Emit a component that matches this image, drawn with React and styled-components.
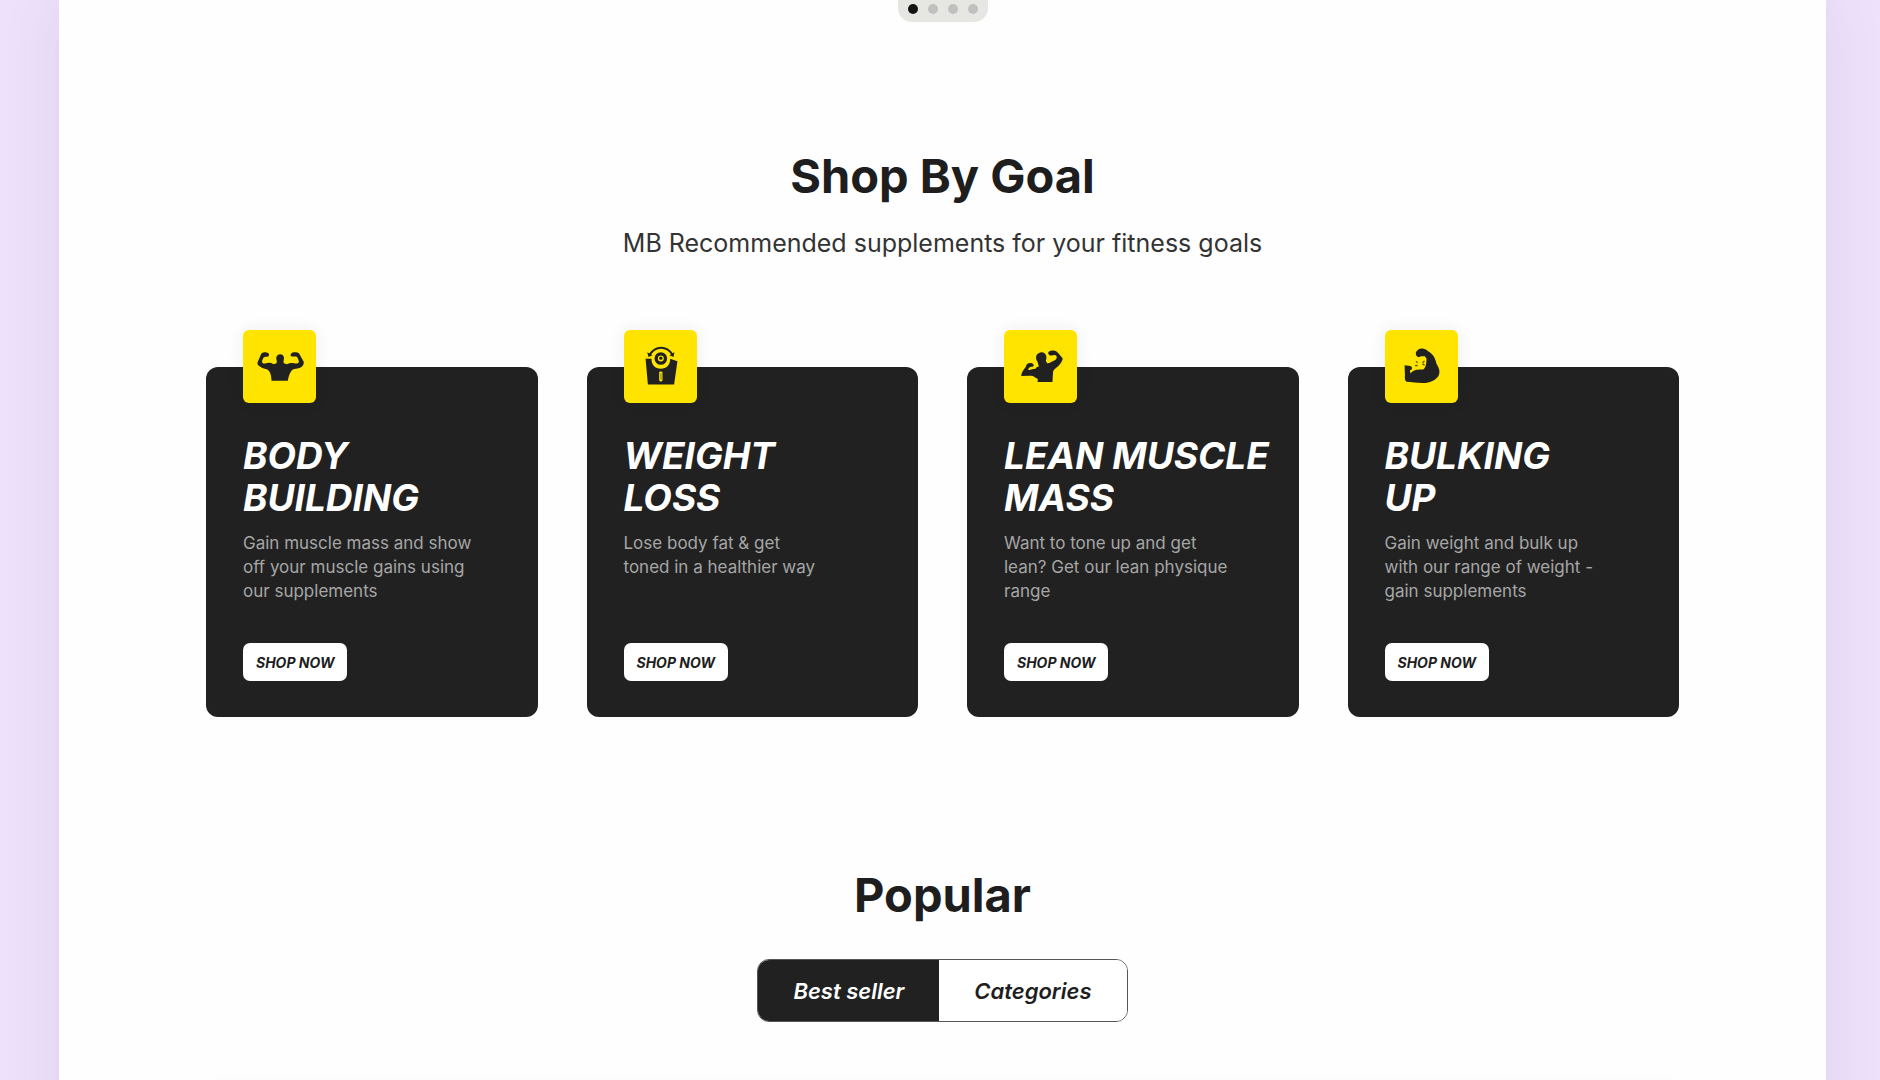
import React, { useState } from 'react'
import styled, { createGlobalStyle } from 'styled-components'

const GlobalStyle = createGlobalStyle`
  * {
    box-sizing: border-box;
  }

  body {
    margin: 0;
    padding: 0 54px 0 59px;
    overflow-x: hidden;
    background-color: #eee1fb;
    color: #1e1e1e;
    font-family: Inter, "Liberation Sans", sans-serif;
  }
`

const Page = styled.main`
  min-height: 100vh;
  padding: 0 147px;
  background-color: #fefefe;
  box-shadow: 0 0 56px rgba(80, 80, 120, 0.1);
`

const Dots = styled.div`
  display: flex;
  justify-content: center;
  gap: 10px;
  width: 90px;
  height: 22px;
  margin: 0 auto;
  padding-top: 4px;
  border-radius: 0 0 14px 14px;
  background-color: #e6e6e2;
`

const Dot = styled.button`
  width: 10px;
  height: 10px;
  padding: 0;
  border: none;
  border-radius: 50%;
  background-color: ${(props) => (props.$active ? '#141414' : '#c0c0c0')};
`

const Section = styled.section`
  display: flex;
  flex-direction: column;
  align-items: center;
  padding-top: ${(props) => props.$top}px;
`

const Title = styled.h2`
  margin: 0;
  font-size: 47px;
  font-weight: 700;
  line-height: 60px;
`

const Subtitle = styled.p`
  margin: 21px 0 0;
  font-size: 25px;
  line-height: 32px;
  color: #333333;
`

const Cards = styled.div`
  display: grid;
  grid-template-columns: repeat(4, 1fr);
  gap: 49px;
  width: 100%;
  margin-top: 108px;
`

const Card = styled.article`
  display: flex;
  flex-direction: column;
  align-items: flex-start;
  min-height: 350px;
  padding: 0 18px 36px 37px;
  border-radius: 12px;
  background-color: #212121;
`

const IconBox = styled.div`
  width: 73px;
  height: 73px;
  margin-top: -37px;
  border-radius: 6px;
  background-color: #ffe400;
  box-shadow: 0 0 16px rgba(40, 40, 80, 0.08);

  svg {
    display: block;
    width: 100%;
    height: 100%;
  }
`

const CardTitle = styled.h3`
  margin: 32px 0 0;
  color: #ffffff;
  font-size: 37px;
  font-style: italic;
  font-weight: 700;
  line-height: 42px;
  white-space: pre-line;
`

const CardText = styled.p`
  margin: 12px 0 20px;
  color: #a6a6a6;
  font-size: 17px;
  line-height: 24px;
  white-space: pre-line;
`

const ShopButton = styled.button`
  height: 38px;
  margin-top: auto;
  padding: 0 13px;
  border: none;
  border-radius: 7px;
  background-color: #ffffff;
  color: #1e1e1e;
  font-family: inherit;
  font-size: 14px;
  font-style: italic;
  font-weight: 700;
`

const Tabs = styled.div`
  display: flex;
  height: 63px;
  margin-top: 34px;
  border: 1px solid #555555;
  border-radius: 12px;
  overflow: hidden;
`

const Tab = styled.button`
  padding: 0 35px;
  border: none;
  background-color: ${(props) => (props.$active ? '#212121' : '#ffffff')};
  color: ${(props) => (props.$active ? '#ffffff' : '#1e1e1e')};
  font-family: inherit;
  font-size: 22px;
  font-style: italic;
  font-weight: 600;
`

const Products = styled.div`
  width: 100%;
  height: 300px;
  margin-top: 62px;
  border-radius: 12px;
  background-color: #ffffff;
  box-shadow: 0 0 16px rgba(0, 0, 0, 0.03);
`

function BodyIcon() {
  return (
    <svg viewBox="38 28 220 220" fill="#212121" aria-hidden="true">
      <path d="M140 122C136 110 140 101 150 101C160 101 164 110 160 122L161 128L170 131C180 126 190 127 197 129C206 130 208 125 205 118L201 109C194 105 189 111 182 106C180 99 186 95 194 95C203 94 208 97 210 104L221 124C222 132 219 137 212 141C201 146 194 143 187 148C181 155 177 161 173 181H124C123 162 120 155 113 148C104 143 97 145 89 138C80 133 81 128 83 123L91 104C93 97 98 94 106 95C115 96 119 101 115 107C109 110 104 107 100 111L96 119C94 127 98 130 105 129C114 126 121 126 130 131L139 128Z" />
    </svg>
  )
}

function ScaleIcon() {
  return (
    <svg viewBox="38 28 220 220" fill="#212121" aria-hidden="true">
      <path d="M103 115H121C120 133 132 145 149 145C166 145 178 133 177 115L199 122L189 192H110Z" />
      <path d="M115 103C133 74 166 75 184 102" fill="none" stroke="#212121" strokeWidth="6" />
      <path d="M108 95L112 109L124 104ZM190 95L187 109L175 104Z" />
      <circle cx="149" cy="114" r="14" fill="none" stroke="#212121" strokeWidth="10" />
      <circle cx="149" cy="113" r="5" />
      <rect x="144" y="153" width="10" height="30" rx="4" fill="#ffe400" />
      <rect x="148" y="158" width="3" height="20" fill="#8a7c12" />
    </svg>
  )
}

function LeanIcon() {
  return (
    <svg viewBox="38 28 220 220" fill="#212121" aria-hidden="true">
      <path d="M139 124C130 110 136 97 150 95C164 94 169 108 164 121L168 128C176 129 181 124 188 121C195 118 199 112 196 106C190 100 184 108 175 104C167 97 173 91 183 90C193 89 197 93 202 98L215 114C214 123 208 130 201 137C195 143 188 145 186 153L184 185H139L140 176C131 171 127 164 115 166L90 167C90 157 97 148 104 139C105 130 112 127 121 128C129 130 129 137 124 139C117 137 114 141 110 148C118 150 123 145 133 145C134 141 139 138 143 138Z" />
    </svg>
  )
}

function BulkIcon() {
  return (
    <svg viewBox="38 28 220 220" fill="#212121" aria-hidden="true">
      <path d="M131 101C130 90 141 84 151 84C160 84 165 91 174 96C185 104 190 115 193 129C198 140 205 147 201 162C195 178 175 188 151 188C134 188 119 184 103 184C98 181 97 174 98 163L97 134C107 136 115 134 119 140L119 147L113 149L115 159C125 145 140 148 153 147C162 142 163 126 163 114L158 107C151 108 146 105 141 110C137 110 132 107 131 101Z" />
      <path d="M131 123L137 126M157 121L151 127M136 135H129M151 130L157 134" fill="none" stroke="#5c5310" strokeWidth="4" />
    </svg>
  )
}

const goals = [
  {
    title: 'BODY\nBUILDING',
    text: 'Gain muscle mass and show\noff your muscle gains using\nour supplements',
    Icon: BodyIcon,
  },
  {
    title: 'WEIGHT\nLOSS',
    text: 'Lose body fat & get\ntoned in a healthier way',
    Icon: ScaleIcon,
  },
  {
    title: 'LEAN MUSCLE\nMASS',
    text: 'Want to tone up and get\nlean? Get our lean physique\nrange',
    Icon: LeanIcon,
  },
  {
    title: 'BULKING\nUP',
    text: 'Gain weight and bulk up\nwith our range of weight -\ngain supplements',
    Icon: BulkIcon,
  },
]

function App() {
  const [slide, setSlide] = useState(0)
  const [tab, setTab] = useState('Best seller')

  return (
    <>
      <GlobalStyle />
      <Page>
        <Dots>
          {[0, 1, 2, 3].map((i) => (
            <Dot
              key={i}
              $active={i === slide}
              aria-label={`Slide ${i + 1}`}
              onClick={() => setSlide(i)}
            />
          ))}
        </Dots>

        <Section $top={124}>
          <Title>Shop By Goal</Title>
          <Subtitle>MB Recommended supplements for your fitness goals</Subtitle>
          <Cards>
            {goals.map(({ title, text, Icon }) => (
              <Card key={title}>
                <IconBox>
                  <Icon />
                </IconBox>
                <CardTitle>{title}</CardTitle>
                <CardText>{text}</CardText>
                <ShopButton>SHOP NOW</ShopButton>
              </Card>
            ))}
          </Cards>
        </Section>

        <Section $top={148}>
          <Title>Popular</Title>
          <Tabs>
            {['Best seller', 'Categories'].map((name) => (
              <Tab
                key={name}
                $active={tab === name}
                aria-pressed={tab === name}
                onClick={() => setTab(name)}
              >
                {name}
              </Tab>
            ))}
          </Tabs>
          <Products />
        </Section>
      </Page>
    </>
  )
}

export default App
